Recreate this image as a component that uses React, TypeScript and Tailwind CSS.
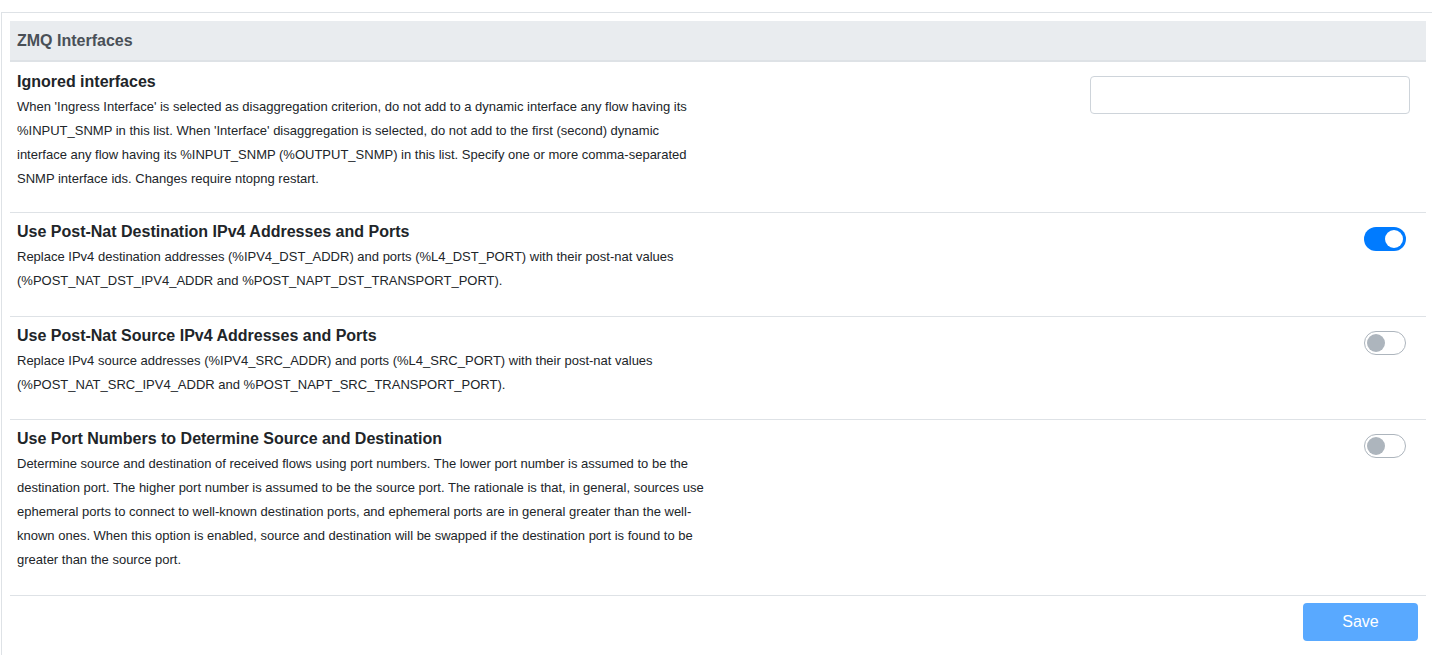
import React from "react";

const Toggle = ({ on }: { on: boolean }) =>
  on ? (
    <div className="w-[42px] h-[24px] rounded-full bg-[#007bff] flex items-center justify-end pr-[3px]">
      <div className="w-[18px] h-[18px] rounded-full bg-white" />
    </div>
  ) : (
    <div className="w-[42px] h-[24px] rounded-full bg-white border-[1.5px] border-[#adb5bd] flex items-center pl-[1.5px]">
      <div className="w-[18px] h-[18px] rounded-full bg-[#adb5bd]" />
    </div>
  );

const Row = ({
  title,
  desc,
  right,
  first,
  rightPad,
}: {
  title: string;
  desc: string;
  right: React.ReactNode;
  first?: boolean;
  rightPad: string;
}) => (
  <div
    className={`flex justify-between pl-[7px] ${
      first ? "pt-[8px] pb-[21px]" : "pt-[7px] pb-[22.5px] border-t border-[#dee2e6]"
    }`}
  >
    <div className="w-[694px]">
      <div className="text-[16px] leading-[24px] font-bold text-[#212529]">{title}</div>
      <div className="mt-[1px] text-[13px] leading-[24px] text-[#212529]">{desc}</div>
    </div>
    <div className={`${first ? "pt-[6px]" : "pt-[7px]"} ${rightPad}`}>{right}</div>
  </div>
);

export default function App() {
  return (
    <div
      className="min-h-screen bg-white pl-px pt-3"
      style={{ fontFamily: '"Liberation Sans", Arial, sans-serif' }}
    >
      <div className="w-[1431px] border-t border-l border-[#dee2e6] pl-[8px] pr-[6px] pt-[8px] min-h-[643px]">
        <div className="h-[41px] bg-[#e9ecef] border-b-2 border-[#dee2e6] pl-[7px] flex items-center">
          <span className="text-[16px] font-bold text-[#495057]">ZMQ Interfaces</span>
        </div>
        <Row
          first
          rightPad="pr-[16px]"
          title="Ignored interfaces"
          desc="When 'Ingress Interface' is selected as disaggregation criterion, do not add to a dynamic interface any flow having its %INPUT_SNMP in this list. When 'Interface' disaggregation is selected, do not add to the first (second) dynamic interface any flow having its %INPUT_SNMP (%OUTPUT_SNMP) in this list. Specify one or more comma-separated SNMP interface ids. Changes require ntopng restart."
          right={<div className="w-[320px] h-[38px] border border-[#ced4da] rounded bg-white" />}
        />
        <Row
          rightPad="pr-[20px]"
          title="Use Post-Nat Destination IPv4 Addresses and Ports"
          desc="Replace IPv4 destination addresses (%IPV4_DST_ADDR) and ports (%L4_DST_PORT) with their post-nat values (%POST_NAT_DST_IPV4_ADDR and %POST_NAPT_DST_TRANSPORT_PORT)."
          right={<Toggle on />}
        />
        <Row
          rightPad="pr-[20px]"
          title="Use Post-Nat Source IPv4 Addresses and Ports"
          desc="Replace IPv4 source addresses (%IPV4_SRC_ADDR) and ports (%L4_SRC_PORT) with their post-nat values (%POST_NAT_SRC_IPV4_ADDR and %POST_NAPT_SRC_TRANSPORT_PORT)."
          right={<Toggle on={false} />}
        />
        <Row
          rightPad="pr-[20px]"
          title="Use Port Numbers to Determine Source and Destination"
          desc="Determine source and destination of received flows using port numbers. The lower port number is assumed to be the destination port. The higher port number is assumed to be the source port. The rationale is that, in general, sources use ephemeral ports to connect to well-known destination ports, and ephemeral ports are in general greater than the well-known ones. When this option is enabled, source and destination will be swapped if the destination port is found to be greater than the source port."
          right={<Toggle on={false} />}
        />
        <div className="border-t border-[#dee2e6] flex justify-end pt-[7px] pr-[8px]">
          <button className="w-[115px] h-[38px] rounded bg-[#59a9ff] text-white text-[16px]">
            Save
          </button>
        </div>
      </div>
    </div>
  );
}
